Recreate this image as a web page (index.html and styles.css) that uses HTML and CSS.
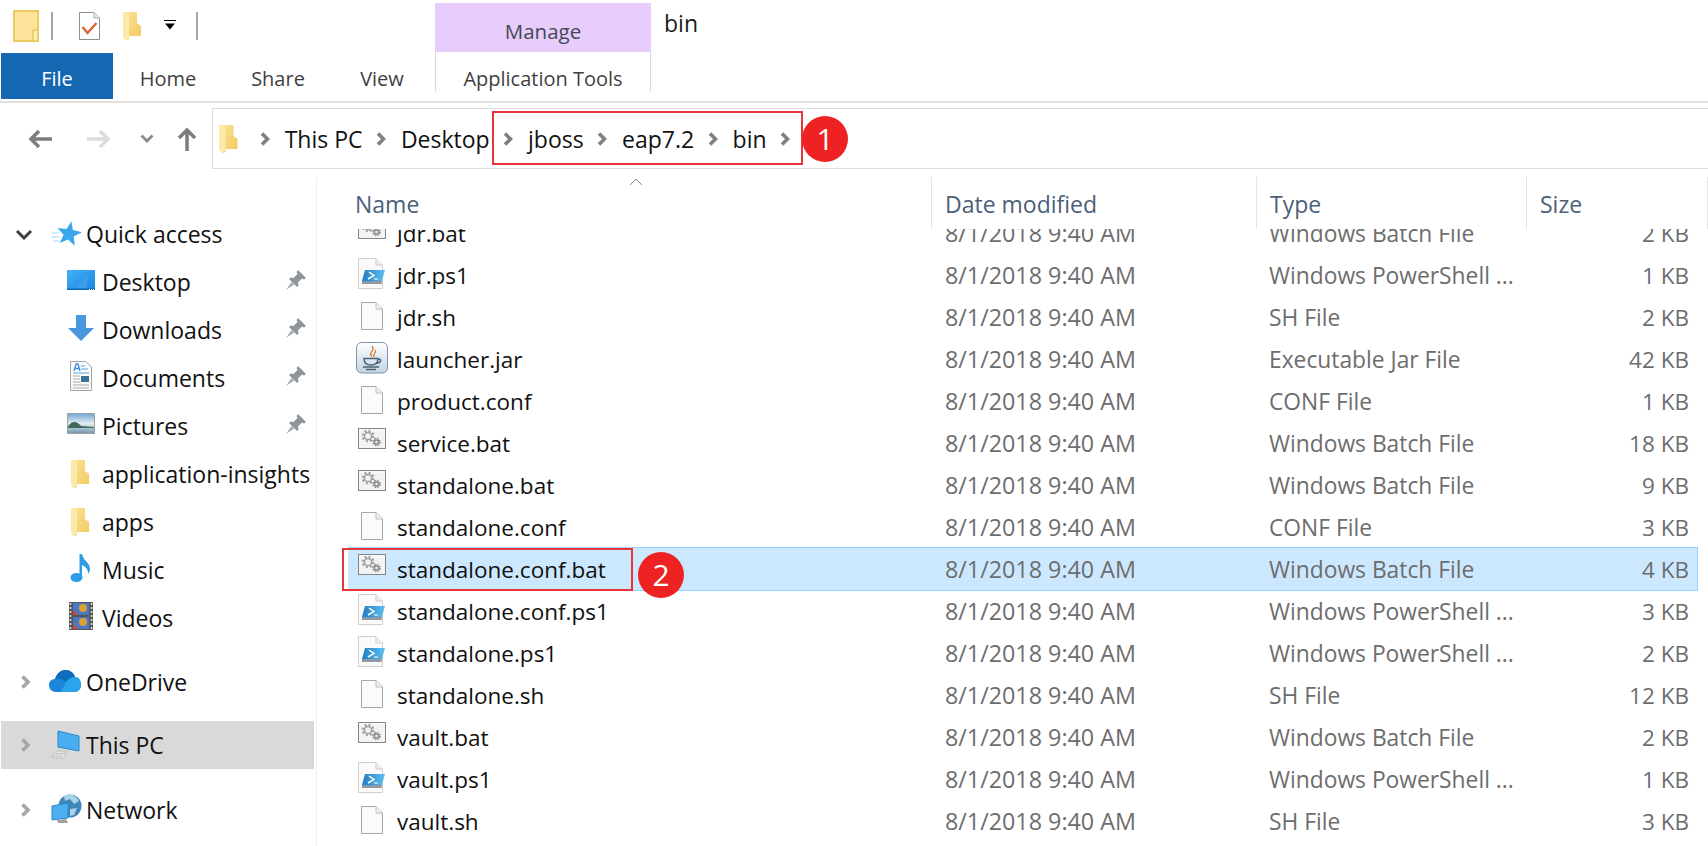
FILE: index.html
```html
<!DOCTYPE html>
<html lang="en">
<head>
  <meta charset="UTF-8" />
  <title>bin</title>
  <link rel="stylesheet" href="styles.css">
</head>
<body>

  <!-- shared icons -->
  <svg class="sprites" aria-hidden="true">
    <defs>
      <linearGradient id="gFolder" x1="0" y1="0" x2="1" y2="1">
        <stop offset="0" stop-color="#fae29a"/>
        <stop offset="1" stop-color="#f4c95e"/>
      </linearGradient>
      <linearGradient id="gScreen" x1="0" y1="0" x2="1" y2="1">
        <stop offset="0" stop-color="#45b0f8"/>
        <stop offset="1" stop-color="#1a85e0"/>
      </linearGradient>
      <linearGradient id="gSky" x1="0" y1="0" x2="0" y2="1">
        <stop offset="0" stop-color="#6fa6d6"/>
        <stop offset=".5" stop-color="#e6eef2"/>
        <stop offset="1" stop-color="#6c95ad"/>
      </linearGradient>
      <linearGradient id="gJar" x1="0" y1="0" x2="0" y2="1">
        <stop offset="0" stop-color="#ffffff"/>
        <stop offset="1" stop-color="#c3d3e3"/>
      </linearGradient>
      <linearGradient id="gPs" x1="0" y1="0" x2="1" y2="0">
        <stop offset="0" stop-color="#1d7cc4"/>
        <stop offset="1" stop-color="#62c0ee"/>
      </linearGradient>
      <symbol id="i-folder" viewBox="0 0 18 28">
        <path d="M0 0H14V11L18 14V24H6V27L3 28L0 25Z" fill="url(#gFolder)"/>
        <path d="M0 0L6 1V25L3 28L0 25Z" fill="#fde9a8"/>
      </symbol>
      <symbol id="i-bat" viewBox="0 0 32 32">
        <rect x="2.500" y="2.500" width="27" height="20" fill="#f3f3f3" stroke="#858585"/>
        <path d="M3 4H29" stroke="#fff" />
        <circle cx="12" cy="10" r="3.600" fill="none" stroke="#9d9d9d" stroke-width="1.500"/>
        <circle cx="12" cy="10" r="5.300" fill="none" stroke="#9d9d9d" stroke-width="2.200" stroke-dasharray="2 2.150"/>
        <circle cx="20.500" cy="16" r="2" fill="none" stroke="#858585" stroke-width="1.300"/>
        <circle cx="20.500" cy="16" r="3.500" fill="none" stroke="#858585" stroke-width="1.600" stroke-dasharray="1.600 1.150"/>
      </symbol>
      <symbol id="i-doc" viewBox="0 0 32 32">
        <path d="M5.500 2.500H20L26.500 9V29.500H5.500Z" fill="#fbfbfb" stroke="#a6a6a6"/>
        <path d="M20 2.500V9H26.500" fill="#f0f0f0" stroke="#bdbdbd"/>
      </symbol>
      <symbol id="i-ps1" viewBox="0 0 32 32">
        <path d="M2.500 .5H20L26.500 7V30.500H2.500Z" fill="#fafafa" stroke="#cfcfcf"/>
        <path d="M20 .5V7H26.500" fill="#efefef" stroke="#cfcfcf"/>
        <path d="M9 12H29L26 23H6Z" fill="url(#gPs)"/>
        <path d="M13 14L18 17.500L12 21" fill="none" stroke="#fff" stroke-width="1.500"/>
        <path d="M18 21H22" stroke="#fff" stroke-width="1.100"/>
        <path d="M6 23H26L25.500 26H6Z" fill="#8d9aa6"/>
      </symbol>
      <symbol id="i-jar" viewBox="0 0 32 32">
        <rect x=".5" y=".5" width="31" height="30.500" rx="5" fill="url(#gJar)" stroke="#7f92a8"/>
        <path d="M16 4C20 8 12 10 15.500 14.500C13 10.500 19 9 16 4ZM19 8C21 11 16 12 18 15C16.500 12 21 11 19 8Z" fill="#e0782a" stroke="#e0782a"/>
        <path d="M8 16.500H22C22 22 19 23 15 23C11 23 8 22 8 16.500ZM22 17C26 16.500 25.500 21 20 21.500" fill="none" stroke="#4a6378" stroke-width="1.500"/>
        <path d="M7 25H23M10 27.500H20" stroke="#4a6378" stroke-width="1.300"/>
      </symbol>
      <symbol id="i-pin" viewBox="0 0 20 20">
        <path d="M12 0L20 8L18 9.500L16 8.500L12 12.500L12.500 15.500L11 17L3 9L4.500 7.500L7.500 8L11.500 4L10.500 2Z" fill="#8f959b"/>
        <path d="M5.500 12L0 20L8 14.500Z" fill="#a3a8ad"/>
      </symbol>
      <symbol id="i-chev" viewBox="0 0 10 16">
        <path d="M2 2.500L7.500 8L2 13.500" fill="none" stroke="currentColor" stroke-width="3.600"/>
      </symbol>
    </defs>
  </svg>

  <header class="ribbon">
    <div class="titlebar">
      <div class="qat">
        <svg class="qat-box" viewBox="0 0 26 32">
          <rect x="1" y="1" width="24" height="30" fill="#fde49a" stroke="#ebc95c" stroke-width="2"/>
          <rect x="20" y="20" width="5" height="11" fill="#fdeeb8" stroke="#ebc95c" stroke-width="1.500"/>
        </svg>
        <span class="qat-sep"></span>
        <svg class="qat-check" viewBox="0 0 21 28">
          <path d="M.5 .5H15L20.500 6V27.500H.5Z" fill="#fff" stroke="#8f8f8f"/>
          <path d="M15 .5V6H20.500" fill="#e8e8e8" stroke="#b0b0b0"/>
          <path d="M3.500 15L8.500 21L17.500 11" fill="none" stroke="#dd6236" stroke-width="2.400"/>
        </svg>
        <svg class="qat-folder"><use href="#i-folder"/></svg>
        <svg class="qat-drop" viewBox="0 0 12 10">
          <path d="M0 .5H12" stroke="#000"/>
          <path d="M1 3.500H11L6 9.500Z" fill="#000"/>
        </svg>
        <span class="qat-sep qat-sep-last"></span>
      </div>
      <div class="manage">Manage</div>
      <div class="window-title">bin</div>
    </div>
    <nav class="tabs">
      <div class="tab-file">File</div>
      <div class="tab tab-home">Home</div>
      <div class="tab tab-share">Share</div>
      <div class="tab tab-view">View</div>
      <div class="tab-tools">Application Tools</div>
    </nav>
  </header>

  <div class="address-row">
    <div class="nav-buttons">
      <svg class="nav-back" viewBox="0 0 24 20"><path d="M24 10H4M11 2L3 10L11 18" fill="none" stroke="#7d7d7d" stroke-width="3.500"/></svg>
      <svg class="nav-forward" viewBox="0 0 24 20"><path d="M0 10H20M13 2L21 10L13 18" fill="none" stroke="#dcdcdc" stroke-width="3.500"/></svg>
      <svg class="nav-recent" viewBox="0 0 14 9"><path d="M1.500 1.500L7 7L12.500 1.500" fill="none" stroke="#8a8a8a" stroke-width="2.800"/></svg>
      <svg class="nav-up" viewBox="0 0 20 24"><path d="M10 24V4M2 11L10 3L18 11" fill="none" stroke="#7d7d7d" stroke-width="3.500"/></svg>
    </div>
    <div class="address-box">
      <svg class="crumb-folder"><use href="#i-folder"/></svg>
      <svg class="chev chev-first"><use href="#i-chev"/></svg>
      <span class="crumb">This PC</span>
      <svg class="chev"><use href="#i-chev"/></svg>
      <span class="crumb">Desktop</span>
      <svg class="chev"><use href="#i-chev"/></svg>
      <span class="crumb">jboss</span>
      <svg class="chev"><use href="#i-chev"/></svg>
      <span class="crumb">eap7.2</span>
      <svg class="chev"><use href="#i-chev"/></svg>
      <span class="crumb">bin</span>
      <svg class="chev"><use href="#i-chev"/></svg>
    </div>
  </div>

  <div class="explorer">
    <aside class="sidebar">
      <div class="nav-group nav-group-quick">
        <div class="nav-row nav-top">
          <svg class="tree-open" viewBox="0 0 18 11"><path d="M2 2L9 9L16 2" fill="none" stroke="#404040" stroke-width="3"/></svg>
          <svg class="nav-icon" viewBox="0 0 32 32">
            <path d="M2 17H9M1 21H10M3 25H9" stroke="#a9d8f8" stroke-width="1.200"/>
            <polygon points="19,5 22.200,13.500 31.400,14 24.200,19.700 26.600,28.500 19,23.500 11.400,28.500 13.800,19.700 6.600,14 15.800,13.500" fill="#3aa6ee" transform="rotate(10 19 18)"/>
          </svg>
          <span>Quick access</span>
        </div>
        <div class="nav-row nav-sub">
          <svg class="nav-icon" viewBox="0 0 32 32">
            <rect x="2" y="6" width="28" height="20" fill="url(#gScreen)"/>
            <path d="M2 26H30V24.500H2Z" fill="#0d68b4"/>
            <path d="M11 24L22 12V24Z" fill="#fff" fill-opacity=".1"/>
            <path d="M24 25.500H29" stroke="#fff" stroke-dasharray="1 1"/>
          </svg>
          <span>Desktop</span>
          <svg class="pin"><use href="#i-pin"/></svg>
        </div>
        <div class="nav-row nav-sub">
          <svg class="nav-icon" viewBox="0 0 32 32"><path d="M11 3H21V16H29L16 29L3 16H11Z" fill="#4a97de"/></svg>
          <span>Downloads</span>
          <svg class="pin"><use href="#i-pin"/></svg>
        </div>
        <div class="nav-row nav-sub">
          <svg class="nav-icon" viewBox="0 0 32 32">
            <path d="M5.500 1.500H21L26.500 7V30.500H5.500Z" fill="#fbfbfb" stroke="#a3a3a3"/>
            <path d="M9 11L11 4H13L15 11M10 8.500H14" fill="none" stroke="#3c8fd8" stroke-width="1.300"/>
            <path d="M16 6H20M16 9H23M8 13H24" stroke="#5ba4df" stroke-width="1.200"/>
            <path d="M8 16H15M8 19H15M8 22H15M8 25H24M8 28H24" stroke="#a8a8a8"/>
            <rect x="16" y="16" width="8" height="6" fill="#3b6f95"/>
          </svg>
          <span>Documents</span>
          <svg class="pin"><use href="#i-pin"/></svg>
        </div>
        <div class="nav-row nav-sub">
          <svg class="nav-icon" viewBox="0 0 32 32">
            <rect x="2.500" y="5.500" width="27" height="20" fill="url(#gSky)" stroke="#a0a0a0"/>
            <path d="M3 19C6 12 12 13 16 18L29 19V20H3Z" fill="#3e6b5c"/>
          </svg>
          <span>Pictures</span>
          <svg class="pin"><use href="#i-pin"/></svg>
        </div>
        <div class="nav-row nav-sub">
          <svg class="nav-folder"><use href="#i-folder"/></svg>
          <span>application-insights</span>
        </div>
        <div class="nav-row nav-sub">
          <svg class="nav-folder"><use href="#i-folder"/></svg>
          <span>apps</span>
        </div>
        <div class="nav-row nav-sub">
          <svg class="nav-icon" viewBox="0 0 32 32">
            <ellipse cx="11.500" cy="25.500" rx="6" ry="4.500" fill="#2f9ce6"/>
            <path d="M14.500 2H17C18 9 25 10 25 17C25 19 24 21 23 22C23.500 16 19 14 17 13V26H14.500Z" fill="#2f9ce6"/>
          </svg>
          <span>Music</span>
        </div>
        <div class="nav-row nav-sub">
          <svg class="nav-icon" viewBox="0 0 32 32">
            <rect x="4" y="2" width="24" height="28" fill="#555"/>
            <path d="M5.500 3V29M26.500 3V29" stroke="#ddd" stroke-width="1.600" stroke-dasharray="2 2"/>
            <rect x="8" y="3" width="16" height="12" fill="#4a78c8"/>
            <rect x="8" y="17" width="16" height="12" fill="#4a78c8"/>
            <circle cx="18" cy="8" r="4" fill="#d9a032"/>
            <circle cx="18" cy="22" r="4" fill="#d9a032"/>
            <path d="M8 15V11L13 13L12 15ZM8 29V25L13 27L12 29Z" fill="#c94d3f"/>
          </svg>
          <span>Videos</span>
        </div>
      </div>
      <div class="nav-group">
        <div class="nav-row nav-top">
          <svg class="tree-closed"><use href="#i-chev"/></svg>
          <svg class="nav-icon" viewBox="0 0 32 32">
            <path d="M6 28C1 28 -1 24 -1 21C-1 17 2 15 5 15C7 9 11 6 16 6C20 6 24 9 25 13C29 13 31 17 31 21C31 25 28 28 25 28Z" fill="#1b86d8"/>
            <path d="M5 15C7 9 11 6 16 6C20 6 24 9 25 13C21 13 18 15 16 18C13 15 9 14 5 15Z" fill="#0f6cbd"/>
            <path d="M11 28L16 18C18 15 21 13 25 13C29 13 31 17 31 21C31 25 28 28 25 28Z" fill="#2aa4ea"/>
          </svg>
          <span>OneDrive</span>
        </div>
      </div>
      <div class="nav-group nav-group-pc">
        <div class="nav-row nav-top nav-current">
          <svg class="tree-closed"><use href="#i-chev"/></svg>
          <svg class="nav-icon" viewBox="0 0 32 32">
            <path d="M8 4L29 9V24L8 20Z" fill="#49aef0" stroke="#2a86cc"/>
            <path d="M1 30L7 24H17L14 31H3Z" fill="#e4e4e4" stroke="#b0b0b0" stroke-width=".6"/>
            <path d="M3 29H13M6 26.500H15" stroke="#a6a6a6" stroke-dasharray="1.500 1"/>
          </svg>
          <span>This PC</span>
        </div>
      </div>
      <div class="nav-group">
        <div class="nav-row nav-top">
          <svg class="tree-closed"><use href="#i-chev"/></svg>
          <svg class="nav-icon" viewBox="0 0 32 32">
            <circle cx="20" cy="14" r="11.500" fill="#3f85b8"/>
            <path d="M14 4C19 1 26 3 29 9L24 12L20 7L15 9ZM20 17L27 16L24 23L20 24Z" fill="#a8d3e6"/>
            <path d="M2 14L18 11V26L2 28Z" fill="#4caff0" stroke="#2a86cc"/>
            <path d="M7 28L16 27L18 31H8Z" fill="#a3a3a3"/>
          </svg>
          <span>Network</span>
        </div>
      </div>
    </aside>

    <main class="files">
      <div class="col-head">
        <div class="head-name">Name<svg class="sort-caret" viewBox="0 0 14 8"><path d="M1 7L7 1L13 7" fill="none" stroke="#8a8a8a"/></svg></div>
        <div class="head-cell">Date modified</div>
        <div class="head-cell">Type</div>
        <div class="head-cell">Size</div>
      </div>
      <div class="file-viewport">
        <div class="file-list">
          <div class="file-row"><div class="file-name"><svg><use href="#i-bat"/></svg>jdr.bat</div><div class="file-date">8/1/2018 9:40 AM</div><div class="file-type">Windows Batch File</div><div class="file-size">2 KB</div></div>
          <div class="file-row"><div class="file-name"><svg><use href="#i-ps1"/></svg>jdr.ps1</div><div class="file-date">8/1/2018 9:40 AM</div><div class="file-type">Windows PowerShell ...</div><div class="file-size">1 KB</div></div>
          <div class="file-row"><div class="file-name"><svg><use href="#i-doc"/></svg>jdr.sh</div><div class="file-date">8/1/2018 9:40 AM</div><div class="file-type">SH File</div><div class="file-size">2 KB</div></div>
          <div class="file-row"><div class="file-name"><svg><use href="#i-jar"/></svg>launcher.jar</div><div class="file-date">8/1/2018 9:40 AM</div><div class="file-type">Executable Jar File</div><div class="file-size">42 KB</div></div>
          <div class="file-row"><div class="file-name"><svg><use href="#i-doc"/></svg>product.conf</div><div class="file-date">8/1/2018 9:40 AM</div><div class="file-type">CONF File</div><div class="file-size">1 KB</div></div>
          <div class="file-row"><div class="file-name"><svg><use href="#i-bat"/></svg>service.bat</div><div class="file-date">8/1/2018 9:40 AM</div><div class="file-type">Windows Batch File</div><div class="file-size">18 KB</div></div>
          <div class="file-row"><div class="file-name"><svg><use href="#i-bat"/></svg>standalone.bat</div><div class="file-date">8/1/2018 9:40 AM</div><div class="file-type">Windows Batch File</div><div class="file-size">9 KB</div></div>
          <div class="file-row"><div class="file-name"><svg><use href="#i-doc"/></svg>standalone.conf</div><div class="file-date">8/1/2018 9:40 AM</div><div class="file-type">CONF File</div><div class="file-size">3 KB</div></div>
          <div class="file-row file-selected"><div class="file-name"><svg><use href="#i-bat"/></svg>standalone.conf.bat</div><div class="file-date">8/1/2018 9:40 AM</div><div class="file-type">Windows Batch File</div><div class="file-size">4 KB</div></div>
          <div class="file-row"><div class="file-name"><svg><use href="#i-ps1"/></svg>standalone.conf.ps1</div><div class="file-date">8/1/2018 9:40 AM</div><div class="file-type">Windows PowerShell ...</div><div class="file-size">3 KB</div></div>
          <div class="file-row"><div class="file-name"><svg><use href="#i-ps1"/></svg>standalone.ps1</div><div class="file-date">8/1/2018 9:40 AM</div><div class="file-type">Windows PowerShell ...</div><div class="file-size">2 KB</div></div>
          <div class="file-row"><div class="file-name"><svg><use href="#i-doc"/></svg>standalone.sh</div><div class="file-date">8/1/2018 9:40 AM</div><div class="file-type">SH File</div><div class="file-size">12 KB</div></div>
          <div class="file-row"><div class="file-name"><svg><use href="#i-bat"/></svg>vault.bat</div><div class="file-date">8/1/2018 9:40 AM</div><div class="file-type">Windows Batch File</div><div class="file-size">2 KB</div></div>
          <div class="file-row"><div class="file-name"><svg><use href="#i-ps1"/></svg>vault.ps1</div><div class="file-date">8/1/2018 9:40 AM</div><div class="file-type">Windows PowerShell ...</div><div class="file-size">1 KB</div></div>
          <div class="file-row"><div class="file-name"><svg><use href="#i-doc"/></svg>vault.sh</div><div class="file-date">8/1/2018 9:40 AM</div><div class="file-type">SH File</div><div class="file-size">3 KB</div></div>
        </div>
      </div>
    </main>
  </div>

  <!-- screenshot annotations -->
  <div class="callout-box callout-box-1"></div>
  <div class="callout-num callout-num-1">1</div>
  <div class="callout-box callout-box-2"></div>
  <div class="callout-num callout-num-2">2</div>

</body>
</html>
```

FILE: styles.css
```css
* {
  box-sizing: border-box;
}

html,
body {
  height: 846px;
}

body {
  position: relative;
  margin: 0;
  overflow: hidden;
  background: white;
  color: #1a1a1a;
  font-family: "Open Sans", "Noto Sans", sans-serif;
  font-size: 23px;
}

.sprites {
  position: absolute;
  width: 0;
  height: 0;
}

/* ribbon */

.ribbon {
  height: 103px;
  border-bottom: 2px solid #e0e0e0;
}

.titlebar {
  display: flex;
  height: 52px;
}

.qat {
  display: flex;
  align-items: center;
  width: 435px;
  padding: 0 0 0 13px;
}

.qat-box {
  width: 26px;
  height: 32px;
}

.qat-sep {
  width: 2px;
  height: 28px;
  margin-left: 12px;
  background: #a6a6a6;
}

.qat-sep-last {
  margin-left: 20px;
}

.qat-check {
  width: 21px;
  height: 28px;
  margin-left: 26px;
}

.qat-folder {
  width: 18px;
  height: 28px;
  margin-left: 23px;
}

.qat-drop {
  width: 12px;
  height: 10px;
  margin: 0 0 2px 23px;
}

.manage {
  display: flex;
  align-items: center;
  justify-content: center;
  width: 216px;
  margin-top: 3px;
  padding-top: 6px;
  background: #e8ccfb;
  color: #3f4a55;
  font-size: 20.5px;
}

.window-title {
  margin-left: 13px;
  padding-top: 7px;
}

.tabs {
  display: flex;
  height: 47px;
  font-size: 20px;
}

.tab-file {
  display: flex;
  align-items: center;
  justify-content: center;
  width: 112px;
  height: 46px;
  margin: 1px 0 0 1px;
  padding-top: 4px;
  background: #1667b2;
  color: white;
}

.tab {
  display: flex;
  align-items: center;
  justify-content: center;
  padding-top: 5px;
  color: #3f3f3f;
}

.tab-home {
  width: 110px;
}

.tab-share {
  width: 110px;
}

.tab-view {
  width: 98px;
  margin-right: 4px;
}

.tab-tools {
  display: flex;
  align-items: center;
  justify-content: center;
  width: 216px;
  height: 40px;
  padding-top: 12px;
  border-left: 1px solid #d9d9d9;
  border-right: 1px solid #d9d9d9;
  color: #3f3f3f;
}

/* address bar */

.address-row {
  display: flex;
  height: 66px;
  padding-top: 5px;
}

.nav-buttons {
  display: flex;
  align-items: center;
  width: 212px;
  padding-left: 28px;
}

.nav-buttons svg {
  flex: none;
}

.nav-back,
.nav-forward {
  width: 24px;
  height: 20px;
}

.nav-forward {
  margin-left: 35px;
}

.nav-recent {
  width: 14px;
  height: 9px;
  margin-left: 29px;
}

.nav-up {
  width: 20px;
  height: 24px;
  margin-left: 23px;
}

.address-box {
  display: flex;
  flex: 1;
  align-items: center;
  height: 61px;
  padding-left: 6px;
  border: 1px solid #dcdcdc;
  border-right: none;
  color: #111;
}

.crumb-folder {
  width: 19px;
  height: 28px;
}

.chev {
  flex: none;
  width: 10px;
  height: 16px;
  margin-left: 13.700px;
  color: #808080;
}

.chev-first {
  margin-left: 22px;
}

.crumb {
  margin-left: 14.700px;
}

/* main area */

.explorer {
  display: flex;
  height: 677px;
  padding-top: 8px;
}

.sidebar {
  flex: none;
  width: 317px;
  padding-top: 33px;
  border-right: 1px solid #f0f0f0;
}

.nav-group {
  margin-bottom: 15px;
}

.nav-group-quick {
  margin-bottom: 16px;
}

.nav-group-pc {
  margin-bottom: 17px;
}

.nav-row {
  display: flex;
  align-items: center;
  height: 48px;
  color: #111;
  white-space: nowrap;
}

.nav-top {
  padding-left: 15px;
}

.nav-sub {
  padding-left: 65px;
}

.nav-icon {
  flex: none;
  width: 32px;
  height: 32px;
  margin-top: -4px;
  overflow: visible;
}

.nav-top .nav-icon {
  margin-right: 4px;
}

.nav-sub .nav-icon {
  margin-right: 5px;
}

.nav-folder {
  flex: none;
  width: 18px;
  height: 28px;
  margin: -1px 13px 0 6px;
}

.tree-open {
  width: 18px;
  height: 11px;
  margin-right: 17px;
}

.tree-closed {
  width: 11px;
  height: 16px;
  margin: 0 19px 0 5px;
  color: #a6a6a6;
}

.nav-current {
  width: 313px;
  margin-left: 1px;
  padding-left: 14px;
  background: #d9d9d9;
}

.pin {
  width: 20px;
  height: 20px;
  margin: -4px 10px 0 auto;
}

/* file list */

.files {
  flex: 1;
  min-width: 0;
  padding-left: 31px;
}

.col-head {
  display: grid;
  grid-template-columns: 583px 325px 270px 1fr;
  height: 52px;
  color: #4c607a;
  font-size: 23px;
}

.head-name {
  position: relative;
  padding: 11px 0 0 7px;
}

.head-cell {
  padding: 11px 0 0 13px;
  border-left: 1px solid #e5e5e5;
}

.head-cell:last-child {
  border-right: 1px solid #e5e5e5;
}

.sort-caret {
  position: absolute;
  top: 1px;
  left: 281px;
  width: 14px;
  height: 8px;
}

.file-viewport {
  height: 617px;
  overflow: hidden;
}

.file-list {
  margin-top: -17px;
}

.file-row {
  display: grid;
  grid-template-columns: 583px 325px 270px 171px;
  align-items: center;
  width: 1349px;
  height: 42px;
  font-size: 22.500px;
}

.file-selected {
  background: #cce8ff;
  box-shadow: 0 0 0 1px #99d1ff;
}

.file-name {
  display: flex;
  align-items: center;
  padding-left: 8px;
  color: #111;
}

.file-name svg {
  flex: none;
  width: 32px;
  height: 32px;
  margin: -3px 9px 0 0;
}

.file-date,
.file-type {
  color: #6d6d6d;
  white-space: nowrap;
}

.file-date {
  padding-left: 14px;
  font-size: 23.300px;
}

.file-type {
  padding-left: 13px;
  font-size: 22.800px;
}

.file-size {
  padding-right: 8px;
  color: #6d6d6d;
  text-align: right;
}

/* annotations */

.callout-box {
  position: absolute;
  border: 2px solid #e8343a;
}

.callout-box-1 {
  top: 111px;
  left: 492px;
  width: 311px;
  height: 54px;
}

.callout-box-2 {
  top: 548px;
  left: 342px;
  width: 291px;
  height: 43px;
}

.callout-num {
  position: absolute;
  width: 46px;
  height: 46px;
  border-radius: 50%;
  background: #ee2222;
  color: white;
  font-size: 30px;
  line-height: 46px;
  text-align: center;
}

.callout-num-1 {
  top: 116px;
  left: 802px;
}

.callout-num-2 {
  top: 552px;
  left: 638px;
}
```
